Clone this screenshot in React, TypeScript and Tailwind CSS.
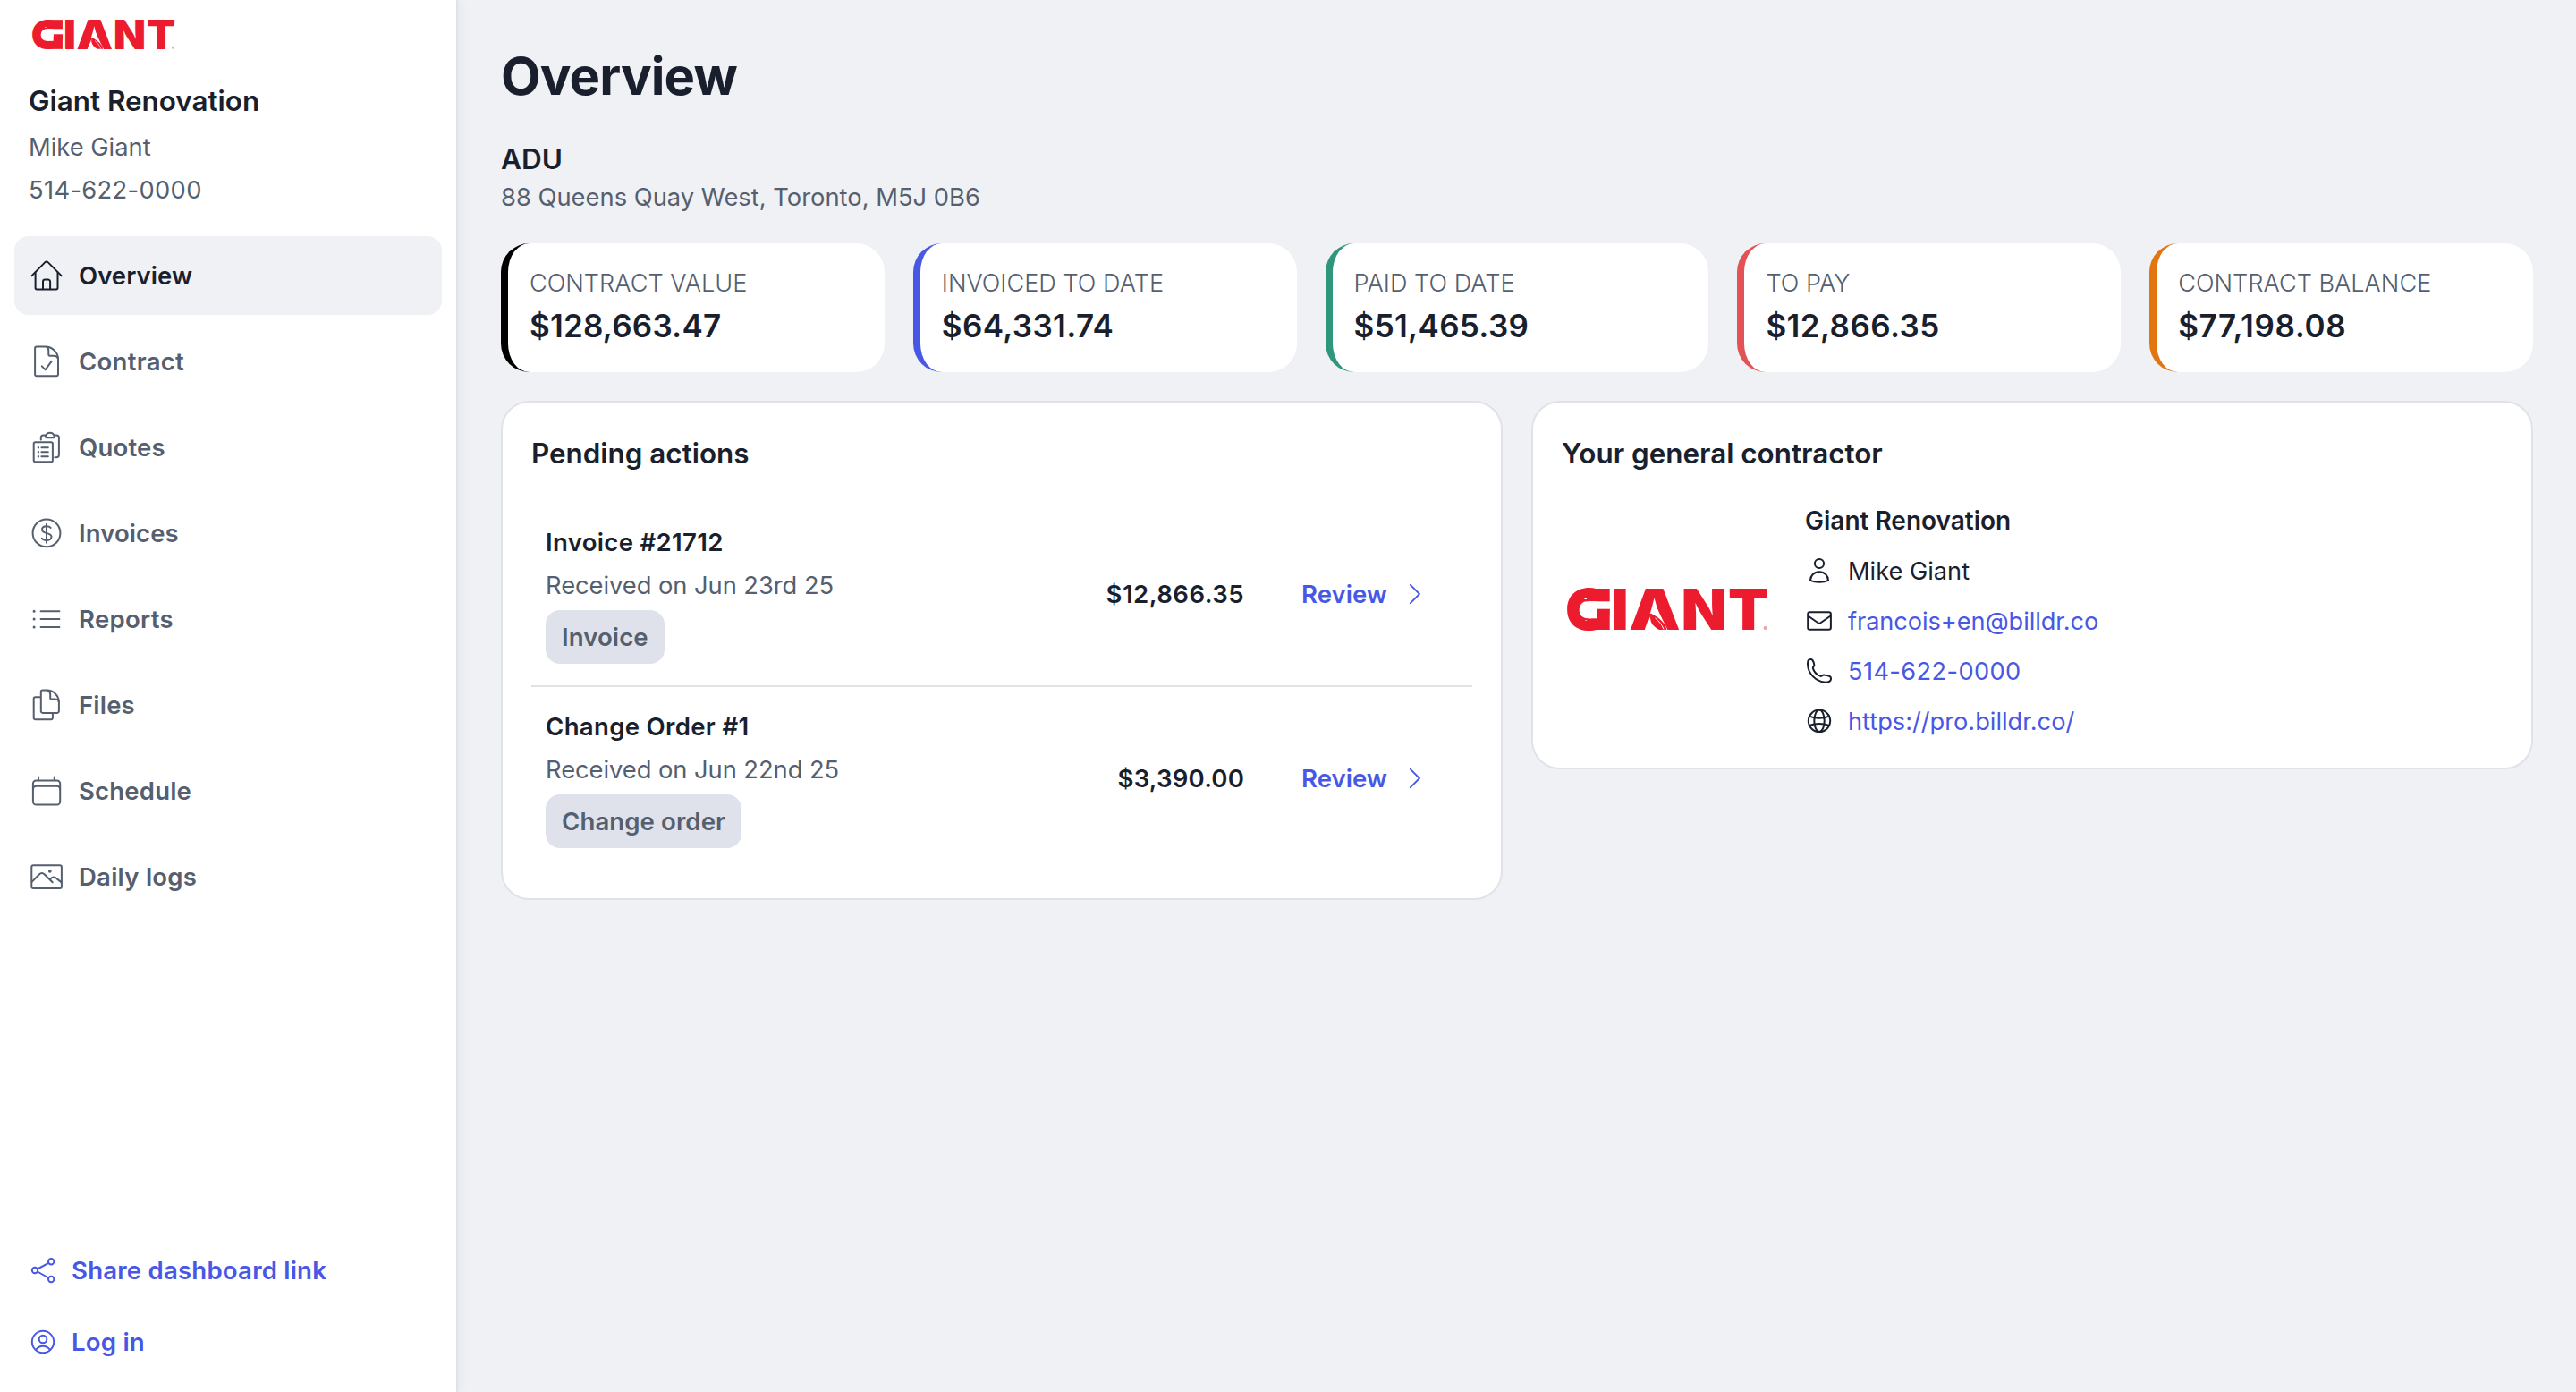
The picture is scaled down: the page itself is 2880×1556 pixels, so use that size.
import React from "react";

const LOGO_LETTERS = [
  { char: "G", x: 24, width: 52.3 },
  { char: "I", x: 58.9, width: 20.1 },
  { char: "A", x: 98, width: 57.5 },
  { char: "N", x: 153.1, width: 51.2 },
  { char: "T", x: 202.6, width: 45.4 },
];

function GiantLogo({ className }: { className: string }) {
  return (
    <svg className={className} viewBox="0 0 225 46" overflow="visible" role="img" aria-label="Giant">
      {LOGO_LETTERS.map((l) => (
        <text
          key={l.char}
          x={l.x}
          y="46"
          textAnchor="middle"
          textLength={l.width}
          lengthAdjust="spacingAndGlyphs"
          fontFamily="Inter, sans-serif"
          fontWeight="900"
          fontSize="63.3"
          fill="#ec1c2e"
        >
          {l.char}
        </text>
      ))}
      {/* squared right side and inner cut of the first letter */}
      <rect x="22" y="0" width="25.7" height="46" fill="#ec1c2e" />
      <rect x="11" y="12" width="20" height="23" fill="#ec1c2e" />
      <rect x="13.7" y="14.3" width="19.6" height="19" rx="8.5" fill="#fff" />
      <rect x="24" y="14.3" width="9.3" height="19" fill="#fff" />
      <rect x="24" y="14.3" width="25" height="8.4" fill="#fff" />
      {/* leaf inside the A */}
      <path d="M98.6 17.5 94 29l-7.300 17.500h26L106.200 33.500Z" fill="#fff" />
      <path d="M93.600 27.500c8 4.500 15.400 9 17.900 18.500h-8.500c-8-4-11.400-10-9.400-18.500Z" fill="#ec1c2e" />
      <path d="M98.500 33c4 3 7.500 7 9.500 12.500" stroke="#fff" strokeWidth="1" fill="none" />
      <circle cx="221.500" cy="44" r="1.900" fill="#f2a0a6" />
    </svg>
  );
}

interface IconProps {
  children: React.ReactNode;
  size?: 40 | 32;
}

function Icon({ children, size = 40 }: IconProps) {
  return (
    <svg
      className={size === 40 ? "size-10 shrink-0" : "size-8 shrink-0"}
      viewBox={`0 0 ${size} ${size}`}
      fill="none"
      stroke="currentColor"
      strokeWidth="2"
      strokeLinecap="round"
      strokeLinejoin="round"
    >
      {children}
    </svg>
  );
}

const NAV_ITEMS = [
  {
    label: "Overview",
    tracking: "tracking-[0.05px]",
    active: true,
    icon: (
      <>
        <path d="M3.4 20.4 18.4 5.1a2.2 2.2 0 0 1 3.2 0L36.8 20.4" />
        <path d="M7.6 16.6v17.2a1.6 1.6 0 0 0 1.6 1.6h21.7a1.6 1.6 0 0 0 1.6-1.6V16.6" />
        <path d="M16 35.2v-8.4a2.4 2.4 0 0 1 2.4-2.4h3.3a2.4 2.4 0 0 1 2.4 2.4v8.4" />
      </>
    ),
  },
  {
    label: "Contract",
    tracking: "tracking-[0.3px]",
    icon: (
      <>
        <path d="M8.9 3.6h9.6C26.6 3.6 33 10 33 17.6v16.9a1.8 1.8 0 0 1-1.8 1.8H8.9a1.8 1.8 0 0 1-1.8-1.8V5.4a1.8 1.8 0 0 1 1.8-1.8Z" />
        <path d="M20 3.7c1.7.6 2.3 2 2.3 4.3v4.1c0 1 .6 1.6 1.6 1.6h3.9c2.6 0 4.3.6 5 2.6" />
        <path d="m14.8 25.4 3.9 4 6.9-9.5" />
      </>
    ),
  },
  {
    label: "Quotes",
    tracking: "tracking-[0.2px]",
    icon: (
      <>
        <rect x="5.7" y="14.2" width="21.2" height="22" rx="1.8" />
        <path d="M14.4 20.2h7.4M14.4 25.3h7.4M14.4 30.3h7.4" />
        <path d="M10.9 20.2h.01M10.9 25.3h.01M10.9 30.3h.01" strokeWidth="2.4" />
        <path d="M13.8 11.6V9.2a2.8 2.8 0 0 1 2.8-2.8h2.2M28.9 6.4h2.2a2.8 2.8 0 0 1 2.8 2.8v19.2a2.8 2.8 0 0 1-2.8 2.8h-1.8" />
        <path d="M20 9.2a1.2 1.2 0 0 1-1.1-1.6c.8-2.3 2.4-3.8 4.9-3.8s4.2 1.5 5 3.8A1.2 1.2 0 0 1 27.7 9.2Z" />
      </>
    ),
  },
  {
    label: "Invoices",
    tracking: "tracking-[0.1px]",
    icon: (
      <>
        <circle cx="20" cy="19.9" r="15.4" />
        <path d="M20 9.8v21" />
        <path d="M24.6 13.9c-.8-1-2.6-1.700-4.600-1.700-3 0-5 1.500-5 3.700 0 2.400 2.100 3.200 5 4 3.200.8 5.500 1.700 5.500 4.200 0 2.300-2.300 3.900-5.500 3.900-2.300 0-4.300-.9-5.200-2.200" />
      </>
    ),
  },
  {
    label: "Reports",
    tracking: "tracking-[0.3px]",
    icon: (
      <>
        <path d="M13.6 11.2h20.8M13.6 20h20.8M13.6 29h20.8" />
        <path d="M6.1 11.2h.01M6.1 20h.01M6.1 29h.01" strokeWidth="3" />
      </>
    ),
  },
  {
    label: "Files",
    tracking: "tracking-[0.2px]",
    icon: (
      <>
        <path d="M12.3 11.2H7.5a1.8 1.8 0 0 0-1.8 1.8v21.5a1.8 1.8 0 0 0 1.8 1.8h17.6a1.8 1.8 0 0 0 1.8-1.8v-4.8" />
        <path d="M15.6 3.5h4.600c7.600 0 13.700 6 13.700 13.400v10.200a1.800 1.800 0 0 1-1.800 1.800H15.600a1.800 1.800 0 0 1-1.800-1.800V5.300a1.800 1.800 0 0 1 1.800-1.800Z" />
        <path d="M21 3.600c2.100.8 3.200 2.400 3.200 4.600v3.700c0 1 .6 1.600 1.600 1.600h3.300c2.700 0 4.300.8 4.700 3" />
      </>
    ),
  },
  {
    label: "Schedule",
    tracking: "tracking-[0.2px]",
    icon: (
      <>
        <rect x="4.9" y="8.5" width="30.3" height="27" rx="3.6" />
        <path d="M4.9 18.3a3.6 3.6 0 0 1 3.6-3.5h23.1a3.6 3.6 0 0 1 3.6 3.5M11 4.6v3.6M28.8 4.6v3.6" />
      </>
    ),
  },
  {
    label: "Daily logs",
    tracking: "tracking-[0.25px]",
    icon: (
      <>
        <rect x="3.3" y="7.2" width="33.6" height="25.8" rx="2" />
        <path d="m3.8 25.6 8-8.1c1.9-1.9 4.1-1.9 6 0l8.900 8.700" />
        <path d="M24.1 23c2.300-3 4.900-3.200 7.300-.9l5 4" />
        <circle cx="23.8" cy="13.8" r=".9" />
      </>
    ),
  },
];

const STATS = [
  { label: "CONTRACT VALUE", value: "$128,663.47", border: "border-black", tracking: "tracking-[0.2px]" },
  { label: "INVOICED TO DATE", value: "$64,331.74", border: "border-[#4858e4]", tracking: "tracking-[0.35px]" },
  { label: "PAID TO DATE", value: "$51,465.39", border: "border-[#2f957b]", tracking: "tracking-[0.3px]" },
  { label: "TO PAY", value: "$12,866.35", border: "border-[#e35254]", tracking: "tracking-[0.4px]" },
  { label: "CONTRACT BALANCE", value: "$77,198.08", border: "border-[#e2750f]", tracking: "tracking-[0.6px]" },
];

const PENDING_ACTIONS = [
  {
    title: "Invoice #21712",
    received: "Received on Jun 23rd 25",
    tag: "Invoice",
    amount: "$12,866.35",
    tracking: "tracking-[0.45px]",
  },
  {
    title: "Change Order #1",
    received: "Received on Jun 22nd 25",
    tag: "Change order",
    amount: "$3,390.00",
    tracking: "tracking-[0.15px]",
  },
];

function Sidebar() {
  return (
    <aside className="z-10 flex w-[512px] shrink-0 flex-col border-r-2 border-[#dfe2ea] bg-white px-4 pt-[22px] pb-9 shadow-[2px_0_12px_rgba(30,40,70,0.05)]">
      <div className="flex h-[242px] flex-col px-4">
        <GiantLogo className="ml-1 h-[33px] w-[160px]" />
        <h2 className="mt-[34px] text-[31.4px] leading-[48px] font-semibold">Giant Renovation</h2>
        <p className="mt-1 text-[27.3px] leading-[48px] text-[#555f6f]">Mike Giant</p>
        <p className="text-[27.3px] leading-[48px] tracking-[0.35px] text-[#555f6f]">514-622-0000</p>
      </div>

      <nav className="flex flex-col gap-2">
        {NAV_ITEMS.map((item) => (
          <a
            key={item.label}
            className={`flex h-[88px] items-center gap-4 rounded-2xl px-4 ${item.active ? "bg-[#f0f1f5]" : "text-[#555f6f]"}`}
          >
            <Icon>{item.icon}</Icon>
            <span className={`text-[27.5px] leading-10 font-semibold ${item.tracking}`}>{item.label}</span>
          </a>
        ))}
      </nav>

      <div className="mt-auto flex flex-col gap-10 px-4 text-[27.6px] leading-10 font-semibold tracking-[0.2px] text-[#4858e4]">
        <a className="flex items-center gap-4">
          <Icon size={32}>
            <circle cx="7" cy="16" r="3.2" />
            <circle cx="25.2" cy="6.3" r="3.2" />
            <circle cx="25.2" cy="26" r="3.2" />
            <path d="m9.9 14.5 12.4-6.7M9.9 17.500l12.400 7" />
          </Icon>
          Share dashboard link
        </a>
        <a className="flex items-center gap-4">
          <Icon size={32}>
            <circle cx="16" cy="16" r="12.2" />
            <circle cx="16" cy="13" r="4.3" />
            <path d="M8.200 24.600c2-2.600 4.600-3.900 7.800-3.900s5.800 1.300 7.800 3.900" />
          </Icon>
          Log in
        </a>
      </div>
    </aside>
  );
}

function PendingActions() {
  return (
    <section className="rounded-[32px] border-2 border-[#dfe2e9] bg-white p-8">
      <h2 className="mb-[30px] text-[31.4px] leading-[50px] font-semibold">Pending actions</h2>
      {PENDING_ACTIONS.map((action, i) => (
        <div
          key={action.title}
          className={`flex items-center px-4 ${i === 0 ? "h-[206px] border-b-2 border-[#e2e2e2]" : "h-[204px]"}`}
        >
          <div className="-mt-1 flex flex-1 flex-col items-start">
            <h3 className="text-[27.6px] leading-[49px] font-semibold tracking-[0.3px]">{action.title}</h3>
            <p className="text-[27.3px] leading-[48px] tracking-[-0.04px] text-[#555f6f]">{action.received}</p>
            <span className="mt-[3px] rounded-2xl bg-[#dfe2ea] px-[18px] text-[27.6px] leading-[60px] font-semibold tracking-[0.08px] text-[#555f6f]">
              {action.tag}
            </span>
          </div>
          <span className={`pt-0.5 text-[27.6px] font-semibold ${action.tracking}`}>{action.amount}</span>
          <a className="ml-16 flex items-center text-[27.6px] font-semibold text-[#4858e4]">
            <span className="pt-0.5">Review</span>
            <svg className="mr-[42px] ml-[25px] h-[22px] w-3" viewBox="0 0 12 22" fill="none" stroke="currentColor" strokeWidth="1.8">
              <path d="M.6.6 11 11 .6 21.4" strokeLinecap="round" strokeLinejoin="round" />
            </svg>
          </a>
        </div>
      ))}
    </section>
  );
}

function GeneralContractor() {
  return (
    <section className="rounded-[32px] border-2 border-[#dfe2e9] bg-white p-8">
      <h2 className="mb-[30px] text-[31.4px] leading-[50px] font-semibold">Your general contractor</h2>
      <div className="flex gap-8">
        <div className="flex h-[237px] w-60 items-center pl-1.5">
          <GiantLogo className="h-[46px] w-[225px]" />
        </div>
        <div className="flex flex-col gap-4 text-[27.2px] leading-10">
          <h3 className="text-[28px] font-semibold">Giant Renovation</h3>
          <div className="flex items-center gap-4">
            <Icon size={32}>
              <circle cx="16" cy="8" r="5.1" />
              <path d="M16 17.200c6.200 0 9.700 4.400 10 9.600-2.800 1.400-6.200 2-10 2s-7.200-.6-10-2c.3-5.200 3.800-9.600 10-9.600Z" />
            </Icon>
            <span className="h-10 pt-px">Mike Giant</span>
          </div>
          <div className="flex items-center gap-4">
            <Icon size={32}>
              <rect x="3.2" y="6.2" width="25.7" height="19.5" rx="2.2" />
              <path d="m3.800 10.800 10.800 7.400a2.400 2.400 0 0 0 2.800 0l10.800-7.400" />
            </Icon>
            <a className="h-10 pt-px tracking-[-0.08px] text-[#4858e4]">francois+en@billdr.co</a>
          </div>
          <div className="flex items-center gap-4">
            <Icon size={32}>
              <path d="M4.300 3.500c1.500-.6 3.200-.6 4.100.4 1 1.400 1.600 3.300 1.900 5.400.1 1.500-1.500 2-1.500 3.600 1.200 4 4.600 7.600 8.800 9 1.500 0 2-1.600 3.500-1.500 2.400.2 4.900.8 6.700 1.800 1.200.8 1.300 3 .7 4.400-1 1.500-3 2.200-5.400 2.100C12.200 28.400 3.400 19 3 8.500c-.1-2 .2-4.200 1.300-5Z" />
            </Icon>
            <a className="h-10 pt-px tracking-[0.4px] text-[#4858e4]">514-622-0000</a>
          </div>
          <div className="flex items-center gap-4">
            <Icon size={32}>
              <circle cx="16" cy="15.8" r="12.2" />
              <ellipse cx="16" cy="15.8" rx="5.7" ry="12.2" />
              <path d="M5 10.600c3.200 1.400 6.900 2.100 11 2.100s7.800-.7 11-2.100M5 21c3.200-1.400 6.900-2.100 11-2.100s7.800.7 11 2.100" />
            </Icon>
            <a className="h-10 pt-px text-[#4858e4]">https://pro.billdr.co/</a>
          </div>
        </div>
      </div>
    </section>
  );
}

export default function App() {
  return (
    <div className="flex h-screen bg-[#f0f1f5] font-[Inter,sans-serif] text-[#1a1f2e]">
      <Sidebar />
      <main className="flex-1 px-12 pt-12">
        <h1 className="text-[58px] leading-[74px] font-bold tracking-[-0.9px]">Overview</h1>
        <h2 className="mt-8 text-[31.5px] leading-[47px] font-semibold">ADU</h2>
        <p className="text-[27.35px] leading-10 text-[#555f6f]">88 Queens Quay West, Toronto, M5J 0B6</p>

        <div className="mt-[31px] grid grid-cols-5 gap-8">
          {STATS.map((stat) => (
            <div key={stat.label} className={`h-36 rounded-[32px] border-l-8 bg-white px-6 pt-[25px] ${stat.border}`}>
              <p className="text-[27.1px] leading-10 font-light text-[#555f6f]">{stat.label}</p>
              <p className={`text-[35px] leading-[54px] font-semibold ${stat.tracking}`}>{stat.value}</p>
            </div>
          ))}
        </div>

        <div className="mt-8 grid grid-cols-2 items-start gap-8">
          <PendingActions />
          <GeneralContractor />
        </div>
      </main>
    </div>
  );
}
